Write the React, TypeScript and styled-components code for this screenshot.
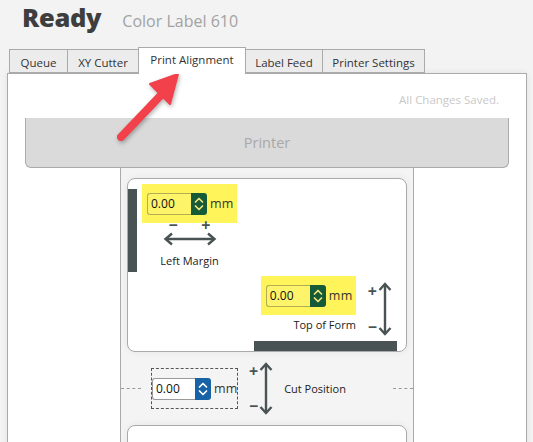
import React from 'react';
import styled, { createGlobalStyle } from 'styled-components';

const GlobalStyle = createGlobalStyle`
  html, body {
    margin: 0;
    padding: 0;
  }
  body {
    background: #f3f3f3;
    font-family: "Open Sans", "Noto Sans", sans-serif;
    color: #333;
  }
`;

const INK = '#4a5354';

const Page = styled.div`
  position: relative;
  width: 533px;
  height: 442px;
  overflow: hidden;
  background: #f3f3f3;
`;

const Header = styled.header`
  display: flex;
  align-items: baseline;
  height: 47px;
  padding-left: 22px;
  box-sizing: border-box;
`;

const Title = styled.h1`
  margin: 0;
  font-size: 25.5px;
  line-height: 34px;
  font-weight: 800;
  color: #3e3e3e;
  letter-spacing: -0.3px;
`;

const Model = styled.span`
  margin-left: 21px;
  font-size: 16px;
  color: #a2a2a2;
`;

const TabBar = styled.nav`
  display: flex;
  align-items: flex-end;
  height: 26px;
  margin-left: 9px;
  position: relative;
  z-index: 1;
`;

const Tab = styled.div<{ $active?: boolean; $width: number }>`
  box-sizing: border-box;
  width: ${(p) => p.$width}px;
  height: ${(p) => (p.$active ? 27 : 24)}px;
  margin-bottom: ${(p) => (p.$active ? -1 : 0)}px;
  padding-top: ${(p) => (p.$active ? 4 : 5)}px;
  border: 1px solid #aaa;
  border-bottom: ${(p) => (p.$active ? 'none' : '1px solid #aaa')};
  background: ${(p) => (p.$active ? '#fff' : '#ececec')};
  font-size: 11.5px;
  color: #333;
  text-align: center;
  white-space: nowrap;
  & + & {
    margin-left: -1px;
  }
`;

const Panel = styled.main`
  box-sizing: border-box;
  margin-left: 7px;
  width: 520px;
  height: 400px;
  background: #fff;
  border: 1px solid #aaa;
  box-shadow: 0 0 6px rgba(0, 0, 0, 0.08);
`;

const SavedNote = styled.div`
  padding: 18px 27px 0 0;
  height: 26px;
  text-align: right;
  font-size: 11.5px;
  color: #c8c8c8;
`;

const PrinterBar = styled.div`
  box-sizing: border-box;
  height: 50px;
  margin: 0 17px;
  background: #dadada;
  border: 1px solid #aaa;
  border-top: none;
  border-radius: 0 0 6px 6px;
  display: flex;
  align-items: center;
  justify-content: center;
  font-size: 14.5px;
  color: #a8a8a8;
`;

const Strip = styled.section`
  box-sizing: border-box;
  width: 294px;
  margin: 0 auto;
  height: 300px;
  padding: 10px 6px 0;
  background: #f4f4f4;
  border-left: 1px solid #aaa;
  border-right: 1px solid #aaa;
`;

const LabelCard = styled.div`
  box-sizing: border-box;
  height: 174px;
  background: #fff;
  border: 1px solid #aaa;
  border-radius: 8px;
  display: flex;
  flex-direction: column;
  overflow: hidden;
  box-shadow: 0 0 8px rgba(0, 0, 0, 0.06);
`;

const TopRow = styled.div`
  display: flex;
  padding-top: 5px;
`;

const EdgeBar = styled.div`
  width: 10px;
  height: 83px;
  margin-top: 5px;
  margin-left: -1px;
  background: ${INK};
`;

const MarginGroup = styled.div`
  margin-left: 5px;
  display: flex;
  flex-direction: column;
  align-items: center;
`;

const Highlight = styled.div`
  box-sizing: border-box;
  width: 95px;
  height: 39px;
  padding-left: 5px;
  background: #fff45a;
  display: flex;
  align-items: center;
`;

const SignRow = styled.div`
  display: flex;
  justify-content: space-between;
  width: 42px;
  height: 10px;
  margin-top: -3px;
  font-size: 16px;
  line-height: 10px;
  font-weight: 700;
  color: ${INK};
`;

const Caption = styled.div<{ $gap?: number }>`
  margin-top: ${(p) => p.$gap ?? 0}px;
  font-size: 11px;
  color: #222;
  white-space: nowrap;
`;

const FormRow = styled.div`
  display: flex;
  justify-content: flex-end;
  align-items: flex-start;
  padding-right: 14px;
  margin-top: 4px;
`;

const FormGroup = styled.div`
  display: flex;
  flex-direction: column;
  align-items: flex-end;
`;

const ArrowSlot = styled.div`
  margin: 6px 0 0 12px;
`;

const BottomBar = styled.div`
  align-self: flex-end;
  width: 143px;
  height: 10px;
  margin: auto 9px 0 0;
  background: ${INK};
`;

const VArrowWrap = styled.div<{ $height: number }>`
  display: flex;
  align-items: stretch;
  height: ${(p) => p.$height}px;
`;

const VSigns = styled.div`
  display: flex;
  flex-direction: column;
  justify-content: space-between;
  padding: 3px 0;
  margin-right: 1px;
  font-size: 16px;
  line-height: 12px;
  font-weight: 700;
  color: ${INK};
`;

const SpinWrap = styled.div`
  display: flex;
  align-items: center;
`;

const SpinInput = styled.div<{ $tone: 'yellow' | 'blue' }>`
  box-sizing: border-box;
  width: ${(p) => (p.$tone === 'yellow' ? 44 : 43)}px;
  height: 22px;
  padding-left: 3px;
  display: flex;
  align-items: center;
  font-size: 12px;
  color: #111;
  border: 1px solid ${(p) => (p.$tone === 'yellow' ? '#b5ad55' : '#9a9a9a')};
  border-right: none;
  border-radius: 3px 0 0 3px;
  background: ${(p) => (p.$tone === 'yellow' ? '#fdf46a' : '#fff')};
`;

const SpinButton = styled.div<{ $tone: 'yellow' | 'blue' }>`
  width: 16px;
  height: 22px;
  border-radius: 0 3px 3px 0;
  background: ${(p) => (p.$tone === 'yellow' ? '#175a38' : '#1862a6')};
  display: flex;
`;

const Unit = styled.span`
  margin-left: 3px;
  font-size: 12.5px;
  color: #333;
  letter-spacing: 0.3px;
`;

const CutRow = styled.div`
  display: flex;
  align-items: center;
  height: 73px;
  margin: 0 -6px;
`;

const DashSeg = styled.div`
  width: 20px;
  border-top: 1px dashed #999;
`;

const Spacer = styled.div`
  flex: 1;
`;

const FocusBox = styled.div`
  box-sizing: border-box;
  width: 87px;
  height: 41px;
  margin: 0 11px 0 10px;
  border: 1px dashed #555;
  display: flex;
  align-items: center;
  white-space: nowrap;
`;

const CutLabel = styled(Caption)`
  margin-left: 11px;
`;

const Annotation = styled.svg`
  position: absolute;
  left: 0;
  top: 0;
  pointer-events: none;
  filter: drop-shadow(1px 2px 2px rgba(0, 0, 0, 0.3));
`;

const Chevrons = ({ color }: { color: string }) => (
  <svg width="16" height="22" viewBox="0 0 16 22">
    <path d="M4.5 9 L8 5.5 L11.5 9" fill="none" stroke={color} strokeWidth="1.7" strokeLinecap="round" strokeLinejoin="round" />
    <path d="M4.5 13 L8 16.5 L11.5 13" fill="none" stroke={color} strokeWidth="1.7" strokeLinecap="round" strokeLinejoin="round" />
  </svg>
);

const Spinner = ({ tone, value }: { tone: 'yellow' | 'blue'; value: string }) => (
  <SpinWrap>
    <SpinInput $tone={tone}>{value}</SpinInput>
    <SpinButton $tone={tone}>
      <Chevrons color={tone === 'yellow' ? '#efe77c' : '#fff'} />
    </SpinButton>
    <Unit>mm</Unit>
  </SpinWrap>
);

const HArrow = () => (
  <svg width="54" height="14" viewBox="0 0 54 14" style={{ marginTop: 2 }}>
    <path d="M3 7 H51" stroke={INK} strokeWidth="2.4" />
    <path d="M9 1.5 L2.5 7 L9 12.5 M45 1.5 L51.5 7 L45 12.5" fill="none" stroke={INK} strokeWidth="2.4" />
  </svg>
);

const VArrow = ({ height }: { height: number }) => (
  <VArrowWrap $height={height}>
    <VSigns>
      <span>+</span>
      <span>−</span>
    </VSigns>
    <svg width="14" height={height} viewBox={`0 0 14 ${height}`}>
      <path d={`M7 2 V${height - 2}`} stroke={INK} strokeWidth="2.4" />
      <path
        d={`M1.5 8 L7 2 L12.5 8 M1.5 ${height - 8} L7 ${height - 2} L12.5 ${height - 8}`}
        fill="none"
        stroke={INK}
        strokeWidth="2.4"
      />
    </svg>
  </VArrowWrap>
);

const tabs = [
  { label: 'Queue', width: 59 },
  { label: 'XY Cutter', width: 72 },
  { label: 'Print Alignment', width: 108 },
  { label: 'Label Feed', width: 78 },
  { label: 'Printer Settings', width: 103 },
];

export default function App() {
  return (
    <Page>
      <GlobalStyle />
      <Header>
        <Title>Ready</Title>
        <Model>Color Label 610</Model>
      </Header>
      <TabBar>
        {tabs.map((t) => (
          <Tab key={t.label} $width={t.width} $active={t.label === 'Print Alignment'}>
            {t.label}
          </Tab>
        ))}
      </TabBar>
      <Panel>
        <SavedNote>All Changes Saved.</SavedNote>
        <PrinterBar>Printer</PrinterBar>
        <Strip>
          <LabelCard>
            <TopRow>
              <EdgeBar />
              <MarginGroup>
                <Highlight>
                  <Spinner tone="yellow" value="0.00" />
                </Highlight>
                <SignRow>
                  <span>−</span>
                  <span>+</span>
                </SignRow>
                <HArrow />
                <Caption $gap={7}>Left Margin</Caption>
              </MarginGroup>
            </TopRow>
            <FormRow>
              <FormGroup>
                <Highlight>
                  <Spinner tone="yellow" value="0.00" />
                </Highlight>
                <Caption $gap={2}>Top of Form</Caption>
              </FormGroup>
              <ArrowSlot>
                <VArrow height={54} />
              </ArrowSlot>
            </FormRow>
            <BottomBar />
          </LabelCard>
          <CutRow>
            <DashSeg />
            <FocusBox>
              <Spinner tone="blue" value="0.00" />
            </FocusBox>
            <VArrow height={53} />
            <CutLabel>Cut Position</CutLabel>
            <Spacer />
            <DashSeg />
          </CutRow>
          <LabelCard />
        </Strip>
      </Panel>
      <Annotation width="533" height="442" viewBox="0 0 533 442">
        <path d="M121 137 L163 93" stroke="#f2414b" strokeWidth="8" strokeLinecap="round" />
        <path d="M178 74 L150 84 L170 104 Z" fill="#f2414b" stroke="#f2414b" strokeWidth="2" strokeLinejoin="round" />
      </Annotation>
    </Page>
  );
}
